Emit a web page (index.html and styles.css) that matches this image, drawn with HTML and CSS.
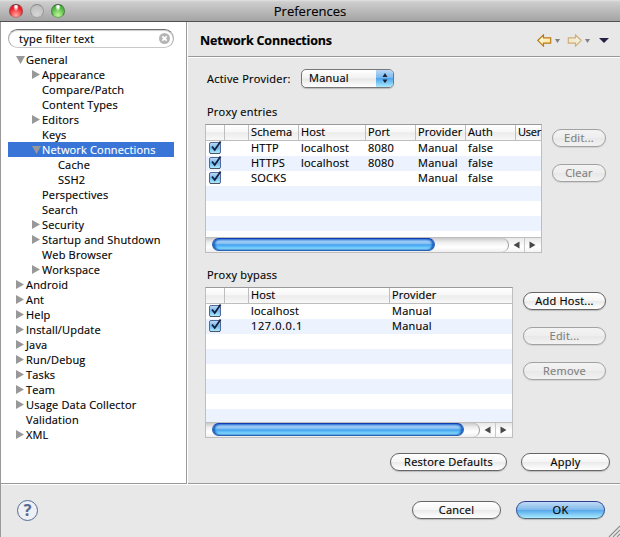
FILE: index.html
```html
<!DOCTYPE html>
<html lang="en">
<head>
<meta charset="utf-8">
<title>Preferences</title>
<link rel="stylesheet" href="styles.css">
</head>
<body>
<svg class="defs" width="0" height="0" aria-hidden="true">
  <defs>
    <linearGradient id="boxfill" x1="0" y1="0" x2="0" y2="1">
      <stop offset="0" stop-color="#c3dcf5"/><stop offset=".5" stop-color="#72b8ee"/><stop offset="1" stop-color="#b5f0ff"/>
    </linearGradient>
    <linearGradient id="arrowfill" x1="0" y1="0" x2="1" y2="1">
      <stop offset="0" stop-color="#fffdf0"/><stop offset="1" stop-color="#fbe08b"/>
    </linearGradient>
    <symbol id="check" viewBox="0 0 14 15">
      <rect x="1.5" y="2.500" width="11" height="11" rx="1.500" fill="url(#boxfill)" stroke="#50679b"/>
      <path d="M2 13.500h10" stroke="#4c5660"/>
      <path d="M4 6.500l2.700 3.500L12.600 1.500" fill="none" stroke="#16213c" stroke-width="1.800"/>
    </symbol>
    <symbol id="right" viewBox="0 0 8 9"><path d="M0 0v9l8-4.500z" fill="#989898"/></symbol>
    <symbol id="down" viewBox="0 0 9 8"><path d="M0 0h9l-4.500 8z" fill="#989898"/></symbol>
    <symbol id="back" viewBox="0 0 15 13"><path d="M.7 6.500L6.500 .9v3h7.200v5.200H6.500v3z" fill="url(#arrowfill)" stroke="#b87a14" stroke-width="1.150"/></symbol>
    <symbol id="small" viewBox="0 0 5 4"><path d="M0 0h5L2.500 4z" fill="#808080"/></symbol>
  </defs>
</svg>
<div class="window">
  <header class="titlebar">
    <i class="light red"></i><i class="light gray"></i><i class="light green"></i>
    <h1>Preferences</h1>
  </header>
  <div class="main">
    <nav class="sidebar">
      <div class="search"><span>type filter text</span>
        <svg width="11" height="11" viewBox="0 0 11 11"><circle cx="5.500" cy="5.500" r="5.500" fill="#b5b5b5"/><path d="M3.300 3.300l4.400 4.400M7.700 3.300L3.300 7.700" stroke="#fff" stroke-width="1.700"/></svg>
      </div>
      <ul class="tree">
        <li><svg class="d"><use href="#down"/></svg><span>General</span></li>
        <li class="l1"><svg><use href="#right"/></svg><span>Appearance</span></li>
        <li class="l1"><i></i><span>Compare/Patch</span></li>
        <li class="l1"><i></i><span>Content Types</span></li>
        <li class="l1"><svg><use href="#right"/></svg><span>Editors</span></li>
        <li class="l1"><i></i><span>Keys</span></li>
        <li class="l1 selected"><svg class="d"><use href="#down"/></svg><span>Network Connections</span></li>
        <li class="l2"><i></i><span>Cache</span></li>
        <li class="l2"><i></i><span>SSH2</span></li>
        <li class="l1"><i></i><span>Perspectives</span></li>
        <li class="l1"><i></i><span>Search</span></li>
        <li class="l1"><svg><use href="#right"/></svg><span>Security</span></li>
        <li class="l1"><svg><use href="#right"/></svg><span>Startup and Shutdown</span></li>
        <li class="l1"><i></i><span>Web Browser</span></li>
        <li class="l1"><svg><use href="#right"/></svg><span>Workspace</span></li>
        <li><svg><use href="#right"/></svg><span>Android</span></li>
        <li><svg><use href="#right"/></svg><span>Ant</span></li>
        <li><svg><use href="#right"/></svg><span>Help</span></li>
        <li><svg><use href="#right"/></svg><span>Install/Update</span></li>
        <li><svg><use href="#right"/></svg><span>Java</span></li>
        <li><svg><use href="#right"/></svg><span>Run/Debug</span></li>
        <li><svg><use href="#right"/></svg><span>Tasks</span></li>
        <li><svg><use href="#right"/></svg><span>Team</span></li>
        <li><svg><use href="#right"/></svg><span>Usage Data Collector</span></li>
        <li><i></i><span>Validation</span></li>
        <li><svg><use href="#right"/></svg><span>XML</span></li>
      </ul>
    </nav>
    <section class="page">
      <div class="heading">
        <h2>Network Connections</h2>
        <div class="history">
          <svg class="arrow" width="15" height="13"><use href="#back"/></svg>
          <svg class="mini" width="5" height="4"><use href="#small"/></svg>
          <svg class="arrow forward" width="15" height="13"><use href="#back"/></svg>
          <svg class="mini" width="5" height="4"><use href="#small"/></svg>
          <svg class="menu" width="10" height="5" viewBox="0 0 10 5"><path d="M0 0h10L5 5z" fill="#252145"/></svg>
        </div>
      </div>
      <div class="content">
        <div class="provider">
          <label>Active Provider:</label>
          <div class="popup"><span>Manual</span>
            <b><svg width="6" height="10" viewBox="0 0 6 10"><path d="M.5 4L3 0l2.500 4zM.5 6.500L3 10.200l2.500-3.700z" fill="#1c2536"/></svg></b>
          </div>
        </div>
        <h3 class="entries-title">Proxy entries</h3>
        <div class="group">
          <div class="table entries">
            <div class="row head"><span></span><span></span><span>Schema</span><span>Host</span><span>Port</span><span>Provider</span><span>Auth</span><span class="user">User</span></div>
            <div class="rows">
              <div class="row"><svg><use href="#check"/></svg><span></span><span>HTTP</span><span>localhost</span><span>8080</span><span>Manual</span><span>false</span></div>
              <div class="row"><svg><use href="#check"/></svg><span></span><span>HTTPS</span><span>localhost</span><span>8080</span><span>Manual</span><span>false</span></div>
              <div class="row"><svg><use href="#check"/></svg><span></span><span>SOCKS</span><span></span><span></span><span>Manual</span><span>false</span></div>
            </div>
            <div class="scroll"><div class="track"><div class="thumb"></div></div>
              <svg class="ends" width="32" height="14" viewBox="0 0 32 14"><path d="M4.500 7l6-3.500v7zM26.500 7l-6-3.500v7z" fill="#484848"/><path d="M15.500 0v14" stroke="#c8c8c8"/></svg>
            </div>
          </div>
          <div class="buttons narrow">
            <button disabled>Edit...</button><button disabled>Clear</button>
          </div>
        </div>
        <h3 class="bypass-title">Proxy bypass</h3>
        <div class="group">
          <div class="table bypass">
            <div class="row head"><span></span><span></span><span>Host</span><span>Provider</span></div>
            <div class="rows">
              <div class="row"><svg><use href="#check"/></svg><span></span><span>localhost</span><span>Manual</span></div>
              <div class="row"><svg><use href="#check"/></svg><span></span><span class="ip">127.0.0.1</span><span>Manual</span></div>
            </div>
            <div class="scroll"><div class="track"><div class="thumb"></div></div>
              <svg class="ends" width="32" height="14" viewBox="0 0 32 14"><path d="M4.500 7l6-3.500v7zM26.500 7l-6-3.500v7z" fill="#484848"/><path d="M15.500 0v14" stroke="#c8c8c8"/></svg>
            </div>
          </div>
          <div class="buttons wide">
            <button>Add Host...</button><button disabled>Edit...</button><button disabled>Remove</button>
          </div>
        </div>
        <div class="apply"><button class="restore">Restore Defaults</button><button>Apply</button></div>
      </div>
    </section>
  </div>
  <footer class="footer">
    <div class="help">?</div>
    <button>Cancel</button><button class="ok">OK</button>
    <svg class="grip" width="12" height="12" viewBox="0 0 12 12"><path d="M1 12L12 1M5 12l7-7M9 12l3-3" stroke="#8b8b8b" stroke-width="1.100"/></svg>
  </footer>
</div>
</body>
</html>
```
FILE: styles.css
```css
* { box-sizing: border-box; }
body { margin: 0; width: 620px; height: 537px; overflow: hidden; background: #e8e8e8; color: #000; font: 11px/15px "Open Sans", "Noto Sans", sans-serif; letter-spacing: .24px; white-space: nowrap; -webkit-text-stroke: .15px; }
h1, h2, h3, ul { margin: 0; padding: 0; font: inherit; }
svg { display: block; flex: none; }
.defs { position: absolute; }
.window { display: flex; flex-direction: column; width: 620px; height: 537px; border-left: 1px solid #999; }

.titlebar { position: relative; display: flex; align-items: center; gap: 7px; height: 22px; padding-left: 9px; background: linear-gradient(#e2e2e2, #cdcdcd 2px, #a4a4a4 21px); border-bottom: 1px solid #505050; margin-left: -1px; }
.titlebar h1 { position: absolute; left: 0; right: 0; top: 2px; text-align: center; font-size: 13px; line-height: 18px; letter-spacing: 0; }
.light { width: 14px; height: 14px; border-radius: 50%; border: 1px solid; }
.red { background: radial-gradient(ellipse at 50% 12%, #fff 0 10%, transparent 32%), radial-gradient(circle at 50% 85%, #ffaaa0, #ef1c25 65%); border-color: #7a2e2e #a84141 #b77b7b; }
.gray { background: radial-gradient(circle at 50% 80%, #d6d6d6, #b8b8b8); border-color: #888 #999 #a4a4a4; }
.green { background: radial-gradient(ellipse at 50% 12%, #fff 0 10%, transparent 32%), radial-gradient(circle at 50% 85%, #c1f89b, #4fb63f 65%); border-color: #336333 #4d8045 #76a466; }

.main { display: flex; height: 463px; border-bottom: 1px solid #fff; box-shadow: inset 0 -1px #999; }
.sidebar { width: 186px; background: #fff; border-right: 1px solid #999; border-bottom: 1px solid #999; padding: 7px 12px 0 7px; }
.search { display: flex; align-items: center; justify-content: space-between; height: 19px; border: 1px solid #aaa; border-top-color: #707070; border-bottom-color: #c8c8c8; border-radius: 10px; padding: 0 3px 0 10px; box-shadow: inset 0 1px 1px #ccc; }
.tree { list-style: none; margin-top: 4px; letter-spacing: .17px; }
.tree li { display: flex; align-items: center; height: 15px; padding-left: 8px; }
.tree .l1 { padding-left: 24px; }
.tree .l2 { padding-left: 40px; }
.tree svg { width: 8px; height: 9px; margin-right: 2px; }
.tree svg.d { width: 9px; height: 8px; margin-right: 1px; }
.tree i { width: 10px; }
.tree .selected { background: #3875d7; color: #fff; }

.page { flex: 1; border-left: 1px solid #fff; }
.heading { display: flex; align-items: center; justify-content: space-between; height: 36px; border-bottom: 1px solid #fff; box-shadow: inset 0 -1px #999; padding: 0 11px 0 12px; }
.heading h2 { font-size: 12.5px; font-weight: 700; letter-spacing: -.19px; padding-top: 2px; }
.history { display: flex; align-items: center; padding-top: 1px; }
.mini { margin: 2px 7px 0 3px; }
.forward { transform: scaleX(-1); opacity: .52; }
.menu { margin-left: 2px; }
.content { padding: 11px 9px 0 17px; }
.provider { display: flex; height: 19px; align-items: center; padding-left: 2px; }
.provider label { width: 94px; }
.popup { display: flex; justify-content: space-between; width: 93px; height: 19px; border: 1px solid #777; border-radius: 5px; background: linear-gradient(#fff, #f2f2f2 48%, #e6e6e6 52%, #fff); overflow: hidden; padding-left: 7px; box-shadow: 0 1px 1px #bbb; line-height: 16px; }
.popup b { display: grid; place-items: center; width: 18px; background: linear-gradient(#c1dcf7, #79b8ee 50%, #4aa3eb 51%, #a9eaff); margin: -1px -1px 0 0; box-shadow: inset -1px 1px #3850a0; }
h3.entries-title { margin: 16px 0 5px 2px; }
h3.bypass-title { margin: 14px 0 5px 2px; }
.group { display: flex; justify-content: space-between; padding-right: 5px; }

.table { display: flex; flex-direction: column; border: 1px solid #bebebe; border-top-color: #999; background: #fff; }
.entries { width: 337px; height: 129px; }
.bypass { width: 308px; height: 151px; }
.row { display: grid; height: 15px; }
.entries .row { grid-template-columns: 19px 24px 50px 67px 50px 50px 50px 25px; }
.bypass .row { grid-template-columns: 19px 24px 141px 122px; }
.row > span { padding-left: 2px; line-height: 13px; }
.row > svg { width: 14px; height: 15px; margin: -1px 0 0 2px; }
.head { height: 16px; border-bottom: 1px solid #bebebe; background: linear-gradient(#fff, #f7f7f7 45%, #ececec 52%, #f8f8f8); letter-spacing: .12px; }
.row.head > span { border-right: 1px solid #bebebe; line-height: 14px; }
.row.head > span:last-child { border: 0; }
.head .user { letter-spacing: -.25px; }
.row .ip { letter-spacing: .6px; }
.rows { flex: 1; background: repeating-linear-gradient(#fff 0 15px, #edf3fe 15px 30px); }
.scroll { display: flex; height: 15px; border-top: 1px solid #bebebe; background: linear-gradient(#e9e9e9, #fff 60%, #f4f4f4); }
.track { flex: 1; border-radius: 0 8px 8px 0; border-right: 1px solid #999; background: linear-gradient(#c9c9c9, #eee 30%, #fff 65%, #eee); padding-left: 6px; }
.thumb { height: 13px; border-radius: 7px; border: 1px solid #2762b4; border-top-color: #123eb1; background: linear-gradient(#5f9eec, #a0cdf6 25%, #78baf2 47%, #3fa0f0 52%, #75cdfc 80%, #a1efff); box-shadow: inset 2px 0 2px #175ebd, inset -2px 0 2px #175ebd; }
.entries .thumb { width: 223px; }
.bypass .thumb { width: 252px; }

.buttons { display: grid; align-content: start; gap: 17px; padding-top: 5px; }
button { height: 18px; padding: 0 0 1px; border: 1px solid #666; border-radius: 9px; background: linear-gradient(#fff, #f5f5f5 48%, #eaeaea 52%, #fff); color: #000; font: inherit; line-height: 14px; letter-spacing: inherit; box-shadow: 0 1px 1px #bbb; width: 89px; }
button:disabled { border-color: #a2a2a2; background: linear-gradient(#f3f3f3, #eee 48%, #e8e8e8 52%, #f2f2f2); color: #7e7e7e; box-shadow: 0 1px 1px #d2d2d2; }
.narrow button { width: 54px; }
.wide button { width: 83px; }
.apply { display: flex; justify-content: flex-end; gap: 14px; margin: 15px 1px 0 0; }
.restore { width: 117px; }

.footer { position: relative; display: flex; height: 52px; padding: 16px 15px 0 16px; gap: 15px; }
.help { width: 21px; height: 21px; margin: -1px auto 0 0; border: 1.500px solid #526c96; border-radius: 50%; background: #eef0f3; color: #576b92; font: 700 16px/18px "Open Sans", sans-serif; text-align: center; letter-spacing: 0; }
.ok { border-color: #2e3e94 #31579b #526a7a; background: linear-gradient(#c0dbf5, #81b9eb 48%, #55a8eb 52%, #a9ebff); }
.grip { position: absolute; right: 0; bottom: 0; }
```
